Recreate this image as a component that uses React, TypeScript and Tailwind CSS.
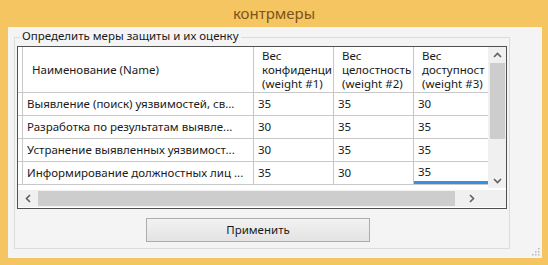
import React from 'react';

const rows = [
  { name: 'Выявление (поиск) уязвимостей, св...', w1: '35', w2: '35', w3: '30' },
  { name: 'Разработка по результатам выявле...', w1: '30', w2: '35', w3: '35' },
  { name: 'Устранение выявленных уязвимост...', w1: '30', w2: '35', w3: '35' },
  { name: 'Информирование должностных лиц ...', w1: '35', w2: '30', w3: '35' },
];

const headers = [
  ['Вес', 'конфиденци', '(weight #1)'],
  ['Вес', 'целостность', '(weight #2)'],
  ['Вес', 'доступност', '(weight #3)'],
];

const Chevron = ({ dir }: { dir: 'up' | 'down' | 'left' | 'right' }) => {
  const d = {
    up: 'M1 6 L4.5 2.5 L8 6',
    down: 'M1 3 L4.5 6.5 L8 3',
    left: 'M6 1 L2.5 4.5 L6 8',
    right: 'M3 1 L6.5 4.5 L3 8',
  }[dir];
  return (
    <svg width="9" height="9" viewBox="0 0 9 9">
      <path d={d} fill="none" stroke="#606060" strokeWidth="1.6" />
    </svg>
  );
};

export default function App() {
  return (
    <div
      className="w-[548px] h-[265px] bg-[#f5c562] flex flex-col overflow-hidden"
      style={{ fontFamily: '"Noto Sans", "Open Sans", sans-serif' }}
    >
      <div className="h-[27px] flex items-center justify-center text-[15px] text-[#7a5418] pb-[1px]">
        контрмеры
      </div>
      <div className="ml-[8px] mr-[6px] h-[231px] bg-[#f4f4f4] relative px-[6px] pt-[10px]">
        {/* group box */}
        <div className="w-[496px] h-[212px] border border-[#dcdcdc] relative">
          <span className="absolute -top-[9px] left-[5px] bg-[#f4f4f4] px-[2px] text-[11.5px] leading-[14px] text-[#1a1a1a]">
            Определить меры защиты и их оценку
          </span>

          {/* data grid */}
          <div className="mt-[8px] ml-[2px] w-[490px] h-[163px] border border-[#505050] bg-white flex flex-col text-[11.5px] text-[#1a1a1a]">
            <div className="flex h-[141px]">
              <div className="w-[470px] overflow-hidden">
                {/* header */}
                <div className="flex h-[46px] border-b border-[#c8c8c8]">
                  <div className="w-[5px] shrink-0 border-r border-[#c8c8c8]" />
                  <div className="w-[231px] shrink-0 border-r border-[#c8c8c8] flex items-center pl-[9px]">
                    Наименование (Name)
                  </div>
                  {headers.map((h, i) => (
                    <div
                      key={i}
                      className={`shrink-0 border-r border-[#c8c8c8] pl-[8px] pt-[2px] leading-[14px] overflow-hidden whitespace-nowrap ${
                        i === 2 ? 'w-[90px]' : 'w-[80px]'
                      }`}
                    >
                      {h.map((l) => (
                        <div key={l}>{l}</div>
                      ))}
                    </div>
                  ))}
                </div>
                {rows.map((r, i) => (
                  <div key={i} className="flex h-[23px] border-b border-[#c8c8c8]">
                    <div className="w-[5px] shrink-0 border-r border-[#c8c8c8]" />
                    <div className="w-[231px] shrink-0 border-r border-[#c8c8c8] flex items-center pl-[4px] whitespace-nowrap overflow-hidden">
                      {r.name}
                    </div>
                    <div className="w-[80px] shrink-0 border-r border-[#c8c8c8] flex items-center pl-[4px]">
                      {r.w1}
                    </div>
                    <div className="w-[80px] shrink-0 border-r border-[#c8c8c8] flex items-center pl-[4px]">
                      {r.w2}
                    </div>
                    <div
                      className={`w-[90px] shrink-0 flex items-center pl-[4px] ${
                        i === 3 ? 'border-b-[3px] border-[#3b8fe0]' : ''
                      }`}
                    >
                      {r.w3}
                    </div>
                  </div>
                ))}
              </div>
              {/* vertical scrollbar */}
              <div className="w-[18px] bg-[#f0f0f0] flex flex-col items-center">
                <div className="h-[16px] flex items-center justify-center">
                  <Chevron dir="up" />
                </div>
                <div className="w-[15px] h-[76px] bg-[#cdcdcd]" />
                <div className="flex-1" />
                <div className="h-[16px] flex items-center justify-center">
                  <Chevron dir="down" />
                </div>
              </div>
            </div>
            {/* horizontal scrollbar */}
            <div className="flex h-[17px] mt-[2px]">
              <div className="w-[470px] bg-[#f0f0f0] flex items-center">
                <div className="w-[20px] flex justify-center">
                  <Chevron dir="left" />
                </div>
                <div className="w-[417px] h-[15px] bg-[#cdcdcd]" />
                <div className="flex-1 flex justify-center">
                  <Chevron dir="right" />
                </div>
              </div>
              <div className="w-[18px] bg-[#f0f0f0]" />
            </div>
          </div>

          <div className="flex justify-center pr-[8px] mt-[9px]">
            <button className="w-[224px] h-[24px] border border-[#adadad] bg-gradient-to-b from-[#f2f2f2] to-[#e3e3e3] text-[11.5px] text-[#1a1a1a]">
              Применить
            </button>
          </div>
        </div>

        {/* size grip */}
        <svg className="absolute right-[2px] bottom-[2px]" width="10" height="10" viewBox="0 0 10 10">
          {[
            [8, 2],
            [8, 5],
            [5, 5],
            [8, 8],
            [5, 8],
            [2, 8],
          ].map(([x, y], i) => (
            <rect key={i} x={x} y={y} width="1.5" height="1.5" fill="#b8b8b8" />
          ))}
        </svg>
      </div>
    </div>
  );
}
